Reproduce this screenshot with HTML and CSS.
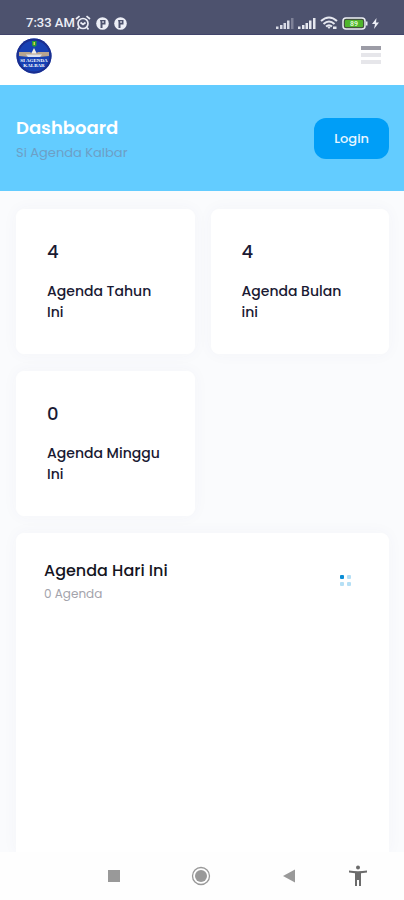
FILE: index.html
```html
<!DOCTYPE html>
<html lang="id">
<head>
<meta charset="utf-8">
<meta name="viewport" content="width=device-width, initial-scale=1">
<title>Dashboard - Si Agenda Kalbar</title>
<link rel="stylesheet" href="styles.css">
</head>
<body>
<div class="status">
  <span class="time">7:33 AM</span>
  <svg class="alarm" width="16" height="16" viewBox="0 0 16 16" fill="none" stroke="#eceef6" stroke-width="1.700"><circle cx="8" cy="8.500" r="5"/><path d="M1 4l3.500-2.800M15 4l-3.500-2.800M5.500 7.500l2.500 2 2.500-2M4 12.500l-1.500 2M12 12.500l1.500 2"/></svg>
  <svg class="badge" width="13" height="13" viewBox="0 0 13 13"><circle cx="6.500" cy="6.500" r="6.300" fill="#eceef6"/><path d="M4 3h5.500v4.500H6.500V11H4.500V5z" fill="#4d526e"/><path d="M6.300 4.300h1.500v1.500H6.300z" fill="#eceef6"/></svg>
  <svg class="badge" width="13" height="13" viewBox="0 0 13 13"><circle cx="6.500" cy="6.500" r="6.300" fill="#eceef6"/><path d="M4 3h5.500v4.500H6.500V11H4.500V5z" fill="#4d526e"/><path d="M6.300 4.300h1.500v1.500H6.300z" fill="#eceef6"/></svg>
  <div class="signals">
    <svg width="18" height="12" viewBox="0 0 18 12" fill="#d9dbe6"><path d="M0 9.500h2.500V12H0zM4 8h2.500v4H4zM7.500 6H10v6H7.500zM11 3.500h2.500V12H11z"/><path d="M15 1h2.500v11H15z" opacity=".35"/></svg>
    <svg width="18" height="12" viewBox="0 0 18 12" fill="#e6e8f0"><path d="M0 9.500h2.500V12H0zM4 8h2.500v4H4zM7.500 6H10v6H7.500zM11 3.500h2.500V12H11zM15 1h2.500v11H15z"/></svg>
    <svg width="18" height="14" viewBox="0 0 18 14" fill="none" stroke="#e6e8f0" stroke-width="2"><path d="M1 5Q9-2 17 5M3.500 8Q9 3 14.500 8M6 10.500Q9 8 12 10.500"/><path d="M7 10.500h4l-2 2.500zM13 10.500h3.500v2.500H13z" fill="#e6e8f0" stroke="none"/></svg>
    <svg width="26" height="13" viewBox="0 0 26 13"><rect x="1" y="1" width="22" height="11" rx="3" fill="#43533f" stroke="#eceef6" stroke-width="1.500"/><rect x="3" y="3" width="18" height="7" rx="1" fill="#4fb52c"/><path d="M24 4.500h1.500v4H24z" fill="#eceef6"/><text x="12" y="9" text-anchor="middle" class="charge">89</text></svg>
    <svg width="7" height="11" viewBox="0 0 7 11"><path d="M4.500 0L0 6h3L2 11l5-6.500H4z" fill="#eceef6"/></svg>
  </div>
</div>
<header class="topbar">
  <a href="#" class="logo" aria-label="Si Agenda Kalbar">
    <svg width="36" height="36" viewBox="0 0 36 36"><circle cx="18" cy="18" r="17.500" fill="#1741b4"/><circle cx="18" cy="18" r="16.500" fill="none" stroke="#1b2e8e" stroke-width="2"/><path d="M16 3h4.500v4.500L18.200 9 16 7.500z" fill="#289b38"/><path d="M17.500 4h1.500v3h-1.500z" fill="#d6d747"/><path d="M18 10l2 4 1.500 2h-7l1.500-2z" fill="#f0eee8"/><path d="M3 14h11l2 1.500h4l2-1.500h11v4l-10 1H13L3 18z" fill="#b7a48f"/><path d="M10 16.500h16l-2 2.500H12z" fill="#dce2ee"/><text x="18" y="24" text-anchor="middle" class="mark">SI AGENDA</text><text x="18" y="28.500" text-anchor="middle" class="mark">KALBAR</text></svg>
  </a>
  <button class="menu" aria-label="Menu"><span></span><span></span><span></span></button>
</header>
<section class="banner">
  <div>
    <h1>Dashboard</h1>
    <p>Si Agenda Kalbar</p>
  </div>
  <a class="login" href="#">Login</a>
</section>
<main>
  <div class="stats">
    <article class="card"><strong>4</strong><p>Agenda Tahun Ini</p></article>
    <article class="card"><strong>4</strong><p>Agenda Bulan ini</p></article>
    <article class="card"><strong>0</strong><p>Agenda Minggu Ini</p></article>
  </div>
  <section class="panel">
    <div>
      <h2>Agenda Hari Ini</h2>
      <p>0 Agenda</p>
    </div>
    <button class="grid" aria-label="Opsi agenda"><svg width="12" height="12" viewBox="0 0 12 12"><rect x="0" y="0" width="4" height="4" rx="1" fill="#0c8ed6"/><g fill="#b5dff5"><rect x="7" y="0" width="4" height="4" rx="1"/><rect x="0" y="7" width="4" height="4" rx="1"/><rect x="7" y="7" width="4" height="4" rx="1"/></g></svg></button>
  </section>
</main>
<nav class="sysnav">
  <button aria-label="Aplikasi terbaru"><svg width="20" height="20" viewBox="0 0 20 20"><rect x="4" y="4" width="12" height="12" fill="#999"/></svg></button>
  <button aria-label="Beranda"><svg width="20" height="20" viewBox="0 0 20 20"><circle cx="10" cy="10" r="8.500" fill="none" stroke="#999" stroke-width="1.300"/><circle cx="10" cy="10" r="6" fill="#999"/></svg></button>
  <button aria-label="Kembali"><svg width="20" height="20" viewBox="0 0 20 20"><path d="M4 10l12-6.500v13z" fill="#999"/></svg></button>
  <button aria-label="Aksesibilitas"><svg width="20" height="22" viewBox="0 0 20 22" fill="#6b6b6b"><circle cx="10" cy="2.500" r="2"/><path d="M1 5.500q9 1.500 18 0v2L13 8.300V21h-2v-6H9v6H7V8.300L1 7.500z"/></svg></button>
</nav>
</body>
</html>
```
FILE: styles.css
```css
* { box-sizing: border-box; }
body {
  margin: 0;
  min-height: 100vh;
  display: flex;
  flex-direction: column;
  background: #fafbfd;
  color: #1a1a33;
  font-family: Poppins, Inter, "Open Sans", sans-serif;
  font-size: 14px;
  line-height: 21px;
}
h1, h2, p { margin: 0; }
button { border: 0; padding: 0; background: none; cursor: pointer; }
svg { display: block; }

.status {
  height: 35px;
  display: flex;
  align-items: center;
  padding: 12px 25px 0 26px;
  background: #4d526e;
  border-bottom: 1px solid #41446a;
}
.time {
  color: #eceef6;
  font: 500 13px/16px Roboto, sans-serif;
}
.badge { margin-left: 5px; }
.signals {
  margin-left: auto;
  display: flex;
  align-items: center;
  gap: 4px;
}
.charge { fill: #d9f5cf; font: 700 7px Roboto, sans-serif; }

.topbar {
  height: 50px;
  display: flex;
  align-items: flex-start;
  justify-content: space-between;
  padding: 3px 23px 0 16px;
  background: #fff;
}
.mark { fill: #fff; font: 700 5px "Liberation Serif", serif; }
.menu {
  width: 20px;
  display: grid;
  gap: 3px;
  margin-top: 8px;
}
.menu span { height: 4px; background: #e6e6ea; }
.menu span:first-child { background: #9c9ca6; }

.banner {
  min-height: 106px;
  display: flex;
  align-items: center;
  justify-content: space-between;
  padding: 0 15px 0 16px;
  background: #63ccff;
}
.banner h1 {
  color: #fff;
  font-size: 18px;
  font-weight: 600;
  line-height: 28px;
}
.banner p { color: #6d9fc6; font-size: 13px; }
.login {
  padding: 10px 20px;
  border-radius: 12px;
  background: #009ef7;
  color: #e8f6ff;
  font-weight: 500;
  font-size: 13px;
  text-decoration: none;
}

main {
  flex: 1;
  display: flex;
  flex-direction: column;
  gap: 17px;
  padding: 18px 15px 0 16px;
}
.stats {
  display: grid;
  grid-template-columns: 1fr 1fr;
  gap: 17px 16px;
}
.card, .panel {
  background: #fff;
  border-radius: 8px;
  box-shadow: 0 0 16px rgba(76, 87, 125, 0.04);
}
.card { padding: 29px 31px 31px; }
.card strong {
  display: block;
  margin-bottom: 16px;
  font-size: 18px;
  font-weight: 500;
  line-height: 27px;
}
.card p { font-weight: 500; }
.panel {
  flex: 1;
  display: flex;
  align-items: flex-start;
  justify-content: space-between;
  padding: 26px 37px 26px 28px;
  border-radius: 8px 8px 0 0;
}
.panel h2 {
  color: #15151f;
  font-size: 16px;
  font-weight: 500;
  line-height: 24px;
}
.panel p { color: #a3a3ab; font-size: 12px; }
.grid { margin-top: 16px; }

.sysnav {
  height: 48px;
  display: grid;
  grid-template-columns: 1fr 1fr 1fr 50px;
  align-items: center;
  justify-items: center;
  padding: 0 21px 0 70px;
  background: #fefefe;
}
```
